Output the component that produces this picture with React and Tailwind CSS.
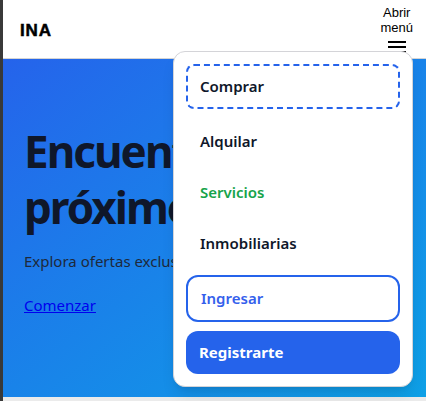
import React from "react";

const font = { fontFamily: '"Noto Sans", "Open Sans", sans-serif' };

const links = [
  { label: "Alquilar", color: "text-[#0f172a]", mt: "mt-[11px]" },
  { label: "Servicios", color: "text-[#16a34a]", mt: "mt-2" },
  { label: "Inmobiliarias", color: "text-[#0f172a]", mt: "mt-2" },
];

export default function App() {
  return (
    <div className="flex h-[401px] w-[426px] overflow-hidden bg-[#ebebeb]">
      {/* left strip */}
      <div className="w-[3px] shrink-0 bg-[#393939]" />

      <div className="relative flex flex-1 flex-col">
        {/* Header */}
        <header className="flex h-[59px] items-start justify-between border-b border-[#d4d4d4] bg-white pl-[17px] pr-[13px]">
          <span className="mt-[18px] text-[17px] font-bold tracking-wider text-black [-webkit-text-stroke:0.5px_black] [font-family:'Liberation_Sans',Arial,sans-serif]">
            INA
          </span>
          <button className="mt-[5px] flex flex-col items-center text-[13px] leading-[15px] text-black [font-family:'Liberation_Sans',Arial,sans-serif]">
            <span>
              Abrir
              <br />
              menú
            </span>
            <span className="mt-[6px] flex flex-col gap-[3px]">
              <span className="block h-[2px] w-[18px] bg-black" />
              <span className="block h-[2px] w-[18px] bg-black" />
              <span className="block h-[2px] w-[18px] bg-black" />
            </span>
          </button>
        </header>

        {/* Hero */}
        <section
          className="flex h-[338px] flex-col bg-gradient-to-br from-[#2563eb] to-[#0ea0e6] px-[21px] pt-[64px]"
          style={font}
        >
          <h1 className="text-[44px] font-bold leading-[56px] tracking-[-0.045em] text-[#0f172a] [font-stretch:90%]">
            Encuentra tu
            <br />
            próximo hogar
          </h1>
          <p className="mt-[14px] text-[15px] leading-6 text-[#1e293b]">
            Explora ofertas exclusivas cerca de ti.
          </p>
          <a href="#" className="mt-[20px] w-fit text-[15px] leading-6 text-[#0000ee] underline">
            Comenzar
          </a>
        </section>

        {/* Dropdown menu */}
        <nav
          className="absolute left-[170px] top-[51px] flex w-[240px] flex-col rounded-xl border border-[#d4d4d8] bg-white p-3 shadow-lg"
          style={font}
        >
          <a
            href="#"
            className="flex h-[45px] items-center rounded-lg border-2 border-dashed border-[#2563eb] px-[12px] text-[15px] font-semibold text-[#0f172a]"
          >
            Comprar
          </a>
          {links.map((l) => (
            <a
              key={l.label}
              href="#"
              className={`flex h-[43px] items-center px-[14px] text-[15px] font-semibold ${l.color} ${l.mt}`}
            >
              {l.label}
            </a>
          ))}
          <a
            href="#"
            className="mt-[10px] flex h-[47px] items-center rounded-xl border-2 border-[#2563eb] px-[13px] text-[15px] font-semibold text-[#3460ec]"
          >
            Ingresar
          </a>
          <a
            href="#"
            className="mt-[9px] flex h-[43px] items-center rounded-xl bg-[#2563eb] px-[13px] text-[15px] font-bold text-white"
          >
            Registrarte
          </a>
        </nav>
      </div>
    </div>
  );
}
